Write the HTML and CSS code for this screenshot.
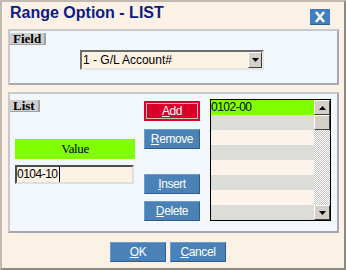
FILE: index.html
```html
<!DOCTYPE html>
<html lang="en">
<head>
  <meta charset="UTF-8">
  <title>Range Option - LIST</title>
  <link rel="stylesheet" href="styles.css">
</head>
<body>
  <div class="dialog">

    <div class="titlebar">
      <span class="title">Range Option - LIST</span>
      <span class="close">
        <svg width="20" height="16" viewBox="0 0 20 16">
          <path d="M6 3 L14 13 M14 3 L6 13" stroke="#ffffff" stroke-width="2.6" fill="none"/>
        </svg>
      </span>
    </div>

    <div class="panel field-panel">
      <div class="tag">Field</div>
      <div class="combo">
        <span class="combo-text">1 - G/L Account#</span>
        <span class="arrow-btn combo-btn">
          <svg width="7" height="4" viewBox="0 0 7 4"><path d="M0 0 H7 L3.5 4 Z" fill="#000"/></svg>
        </span>
      </div>
    </div>

    <div class="panel list-panel">
      <div class="left-col">
        <div class="tag">List</div>
        <div class="value-head">Value</div>
        <div class="value-input">0104-10<span class="caret"></span></div>
      </div>

      <div class="btn-col">
        <button class="btn btn-red"><span class="btn-inner"><u>A</u>dd</span></button>
        <button class="btn"><u>R</u>emove</button>
        <button class="btn btn-insert"><u>I</u>nsert</button>
        <button class="btn"><u>D</u>elete</button>
      </div>

      <div class="listbox">
        <div class="rows">
          <div class="row row-sel">0102-00</div>
          <div class="row row-gray"></div>
          <div class="row"></div>
          <div class="row row-gray"></div>
          <div class="row"></div>
          <div class="row row-gray"></div>
          <div class="row"></div>
          <div class="row row-gray"></div>
        </div>
        <div class="scrollbar">
          <span class="arrow-btn sb-btn">
            <svg width="7" height="4" viewBox="0 0 7 4"><path d="M0 4 H7 L3.5 0 Z" fill="#000"/></svg>
          </span>
          <span class="sb-thumb"></span>
          <span class="sb-track"></span>
          <span class="arrow-btn sb-btn">
            <svg width="7" height="4" viewBox="0 0 7 4"><path d="M0 0 H7 L3.5 4 Z" fill="#000"/></svg>
          </span>
        </div>
      </div>
    </div>

    <div class="footer">
      <button class="btn"><u>O</u>K</button>
      <button class="btn"><u>C</u>ancel</button>
    </div>

  </div>
</body>
</html>
```

FILE: styles.css
```css
body {
  margin: 0;
  padding: 0;
  font-family: "Liberation Sans", Arial, sans-serif;
}

.dialog {
  width: 346px;
  height: 270px;
  box-sizing: border-box;
  background-color: #fbf1e4;
  border: 2px solid;
  border-color: #c2bab2 #8e8882 #8e8882 #c2bab2;
  display: flex;
  flex-direction: column;
}

.titlebar {
  height: 27px;
  display: flex;
  justify-content: space-between;
  align-items: flex-start;
}

.title {
  margin: 2px 0 0 8px;
  font-size: 16px;
  line-height: 18px;
  font-weight: bold;
  color: #0c1a86;
}

.close {
  margin: 7px 14px 0 0;
  width: 20px;
  height: 16px;
  background-color: #3d7dc0;
  box-shadow: inset 0 -1px 0 #2d5f96;
  display: flex;
}

.panel {
  margin: 0 5px 0 6px;
  box-sizing: border-box;
  background-color: #f2f7fc;
  border: 2px solid;
  border-color: #c8c8d0 #a8a8b2 #a8a8b2 #c8c8d0;
}

.field-panel {
  height: 56px;
}

.tag {
  display: inline-block;
  padding: 0 5px 0 3px;
  height: 12px;
  line-height: 12px;
  font-family: "Liberation Serif", "Times New Roman", serif;
  font-size: 13px;
  font-weight: bold;
  color: #000;
  background-color: #cfcfcf;
  box-shadow: inset -2px -1px 0 #a2a2a2;
}

.field-panel .tag {
  margin-top: 2px;
  display: block;
  width: fit-content;
}

.combo {
  margin: 5px 0 0 70px;
  width: 184px;
  height: 20px;
  box-sizing: border-box;
  background-color: #fcf2e4;
  border: 2px solid;
  border-color: #6c6c6c #e6e6e6 #e6e6e6 #6c6c6c;
  display: flex;
  align-items: center;
  justify-content: space-between;
}

.combo-text {
  padding-left: 1px;
  font-size: 12px;
  color: #000;
}

.arrow-btn {
  box-sizing: border-box;
  background-color: #d4d0c8;
  border: 1px solid;
  border-color: #ffffff #404040 #404040 #ffffff;
  display: flex;
  align-items: center;
  justify-content: center;
}

.combo-btn {
  width: 14px;
  height: 16px;
}

.list-panel {
  margin-top: 7px;
  height: 141px;
  display: flex;
  border-bottom-color: #a6a6b0;
}

.left-col {
  width: 134px;
  padding-top: 2px;
}

.value-head {
  margin: 25px 0 0 5px;
  width: 120px;
  height: 20px;
  line-height: 20px;
  text-align: center;
  background-color: #80ff00;
  font-family: "Liberation Serif", "Times New Roman", serif;
  font-size: 13px;
  letter-spacing: -0.4px;
  color: #000;
}

.value-input {
  margin: 6px 0 0 5px;
  width: 119px;
  height: 19px;
  box-sizing: border-box;
  background-color: #fcf2e4;
  border: 2px solid;
  border-color: #4c4c4c #dedede #dedede #4c4c4c;
  font-size: 12px;
  letter-spacing: -0.5px;
  line-height: 15px;
  display: flex;
  align-items: center;
}

.caret {
  margin-left: 1px;
  width: 1px;
  height: 15px;
  background-color: #000;
}

.btn-col {
  width: 56px;
  padding-top: 7px;
  display: flex;
  flex-direction: column;
}

.btn {
  width: 56px;
  height: 20px;
  margin: 0;
  padding: 0;
  box-sizing: border-box;
  background-color: #4a82b8;
  border: 1px solid;
  border-color: #6c9ccc #2e5d8e #2e5d8e #6c9ccc;
  color: #ffffff;
  font-family: "Liberation Sans", Arial, sans-serif;
  font-size: 12px;
  letter-spacing: -0.4px;
  line-height: 17px;
  text-align: center;
}

.btn-col .btn {
  margin-bottom: 8px;
}

.btn-col .btn-insert {
  margin-top: 17px;
  margin-bottom: 7px;
}

.btn-red {
  background-color: #d8002a;
  border-color: #d8002a;
  padding: 1px;
}

.btn-inner {
  display: block;
  height: 16px;
  line-height: 15px;
  border: 1px solid #c8c0c0;
  box-sizing: border-box;
}

.listbox {
  margin: 5px 0 0 10px;
  width: 121px;
  height: 122px;
  box-sizing: border-box;
  border: 1px solid #000;
  display: flex;
}

.rows {
  flex: 1;
}

.row {
  height: 15px;
  line-height: 15px;
  background-color: #fcf4ea;
  font-size: 12px;
  letter-spacing: -0.5px;
  color: #000;
}

.row-gray {
  background-color: #dcdcd8;
}

.row-sel {
  background-color: #80ff00;
}

.scrollbar {
  width: 16px;
  display: flex;
  flex-direction: column;
}

.sb-btn {
  height: 15px;
}

.sb-thumb {
  height: 15px;
  box-sizing: border-box;
  background-color: #d4d0c8;
  border: 1px solid;
  border-color: #ffffff #404040 #404040 #ffffff;
}

.sb-track {
  flex: 1;
  background: repeating-conic-gradient(#c4c4c4 0 25%, #ffffff 0 50%) 0 0 / 2px 2px;
}

.footer {
  margin-top: 9px;
  padding-right: 10px;
  display: flex;
  justify-content: center;
  gap: 4px;
}
```
